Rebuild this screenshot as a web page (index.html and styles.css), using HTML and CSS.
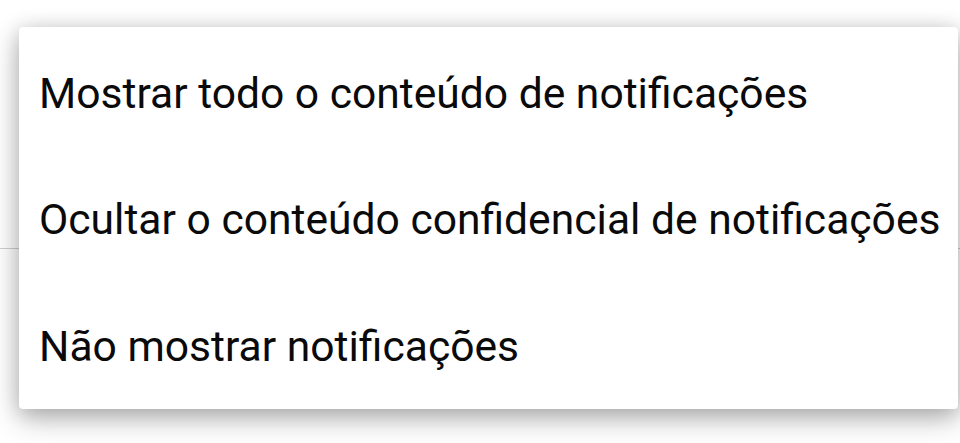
FILE: index.html
```html
<!DOCTYPE html>
<html lang="pt">
<head>
<meta charset="utf-8">
<link rel="stylesheet" href="styles.css">
</head>
<body>
<div class="backdrop">
  <div class="divider"></div>
</div>
<div class="menu">
  <div class="item">Mostrar todo o conteúdo de notificações</div>
  <div class="item">Ocultar o conteúdo confidencial de notificações</div>
  <div class="item">Não mostrar notificações</div>
</div>
</body>
</html>
```
FILE: styles.css
```css
html, body {
  margin: 0;
  padding: 0;
  width: 960px;
  height: 443px;
  overflow: hidden;
  background: #ffffff;
  font-family: Roboto, "Noto Sans", sans-serif;
}
.backdrop {
  position: absolute;
  inset: 0;
}
.divider {
  position: absolute;
  left: 0;
  right: 0;
  top: 248px;
  height: 1px;
  background: #cfcfcf;
}
.menu {
  position: absolute;
  left: 19px;
  top: 27px;
  width: 939px;
  height: 382px;
  background: #ffffff;
  border-radius: 4px;
  box-shadow: 0 10px 28px rgba(0, 0, 0, 0.28), 0 2px 20px rgba(0, 0, 0, 0.14);
  display: flex;
  flex-direction: column;
  padding-top: 3px;
  box-sizing: border-box;
}
.item {
  flex: 1;
  display: flex;
  align-items: center;
  padding-left: 20px;
  font-size: 42.6px;
  color: #0a0a0a;
  white-space: nowrap;
}
```
